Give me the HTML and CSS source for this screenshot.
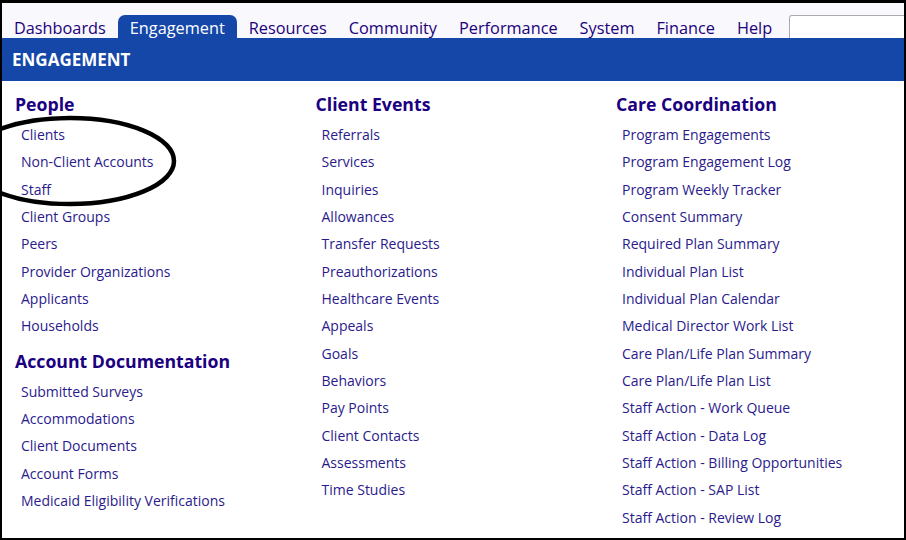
FILE: index.html
```html
<!DOCTYPE html>
<html lang="en">
<head>
    <meta charset="UTF-8">
    <link rel="stylesheet" href="styles.css">
    <title>Engagement</title>
</head>

<body>
    <div class="frame">
        <div class="topnav">
            <a class="tab">Dashboards</a>
            <a class="tab active">Engagement</a>
            <a class="tab">Resources</a>
            <a class="tab">Community</a>
            <a class="tab">Performance</a>
            <a class="tab">System</a>
            <a class="tab">Finance</a>
            <a class="tab">Help</a>
            <input type="text" class="search">
        </div>

        <div class="section-title">ENGAGEMENT</div>

        <div class="menu">
            <div class="col">
                <h2>People</h2>
                <ul>
                    <li><a>Clients</a></li>
                    <li><a>Non-Client Accounts</a></li>
                    <li><a>Staff</a></li>
                    <li><a>Client Groups</a></li>
                    <li><a>Peers</a></li>
                    <li><a>Provider Organizations</a></li>
                    <li><a>Applicants</a></li>
                    <li><a>Households</a></li>
                </ul>
                <h2 class="next">Account Documentation</h2>
                <ul>
                    <li><a>Submitted Surveys</a></li>
                    <li><a>Accommodations</a></li>
                    <li><a>Client Documents</a></li>
                    <li><a>Account Forms</a></li>
                    <li><a>Medicaid Eligibility Verifications</a></li>
                </ul>
            </div>
            <div class="col">
                <h2>Client Events</h2>
                <ul>
                    <li><a>Referrals</a></li>
                    <li><a>Services</a></li>
                    <li><a>Inquiries</a></li>
                    <li><a>Allowances</a></li>
                    <li><a>Transfer Requests</a></li>
                    <li><a>Preauthorizations</a></li>
                    <li><a>Healthcare Events</a></li>
                    <li><a>Appeals</a></li>
                    <li><a>Goals</a></li>
                    <li><a>Behaviors</a></li>
                    <li><a>Pay Points</a></li>
                    <li><a>Client Contacts</a></li>
                    <li><a>Assessments</a></li>
                    <li><a>Time Studies</a></li>
                </ul>
            </div>
            <div class="col">
                <h2>Care Coordination</h2>
                <ul>
                    <li><a>Program Engagements</a></li>
                    <li><a>Program Engagement Log</a></li>
                    <li><a>Program Weekly Tracker</a></li>
                    <li><a>Consent Summary</a></li>
                    <li><a>Required Plan Summary</a></li>
                    <li><a>Individual Plan List</a></li>
                    <li><a>Individual Plan Calendar</a></li>
                    <li><a>Medical Director Work List</a></li>
                    <li><a>Care Plan/Life Plan Summary</a></li>
                    <li><a>Care Plan/Life Plan List</a></li>
                    <li><a>Staff Action - Work Queue</a></li>
                    <li><a>Staff Action - Data Log</a></li>
                    <li><a>Staff Action - Billing Opportunities</a></li>
                    <li><a>Staff Action - SAP List</a></li>
                    <li><a>Staff Action - Review Log</a></li>
                </ul>
            </div>
        </div>

        <!-- pen circle around the first three people links -->
        <svg class="mark" width="200" height="100" viewBox="0 0 200 100">
            <ellipse cx="68" cy="48" rx="104" ry="43" fill="none" stroke="#000" stroke-width="4.5"/>
        </svg>
    </div>
</body>
</html>
```

FILE: styles.css
```css
body {
    margin: 0;
    font-family: 'Open Sans', sans-serif;
    background-color: #fff;
}

.frame {
    position: relative;
    width: 906px;
    height: 540px;
    box-sizing: border-box;
    border-top: 3px solid #000;
    border-left: 2px solid #000;
    border-right: 2px solid #000;
    border-bottom: 2px solid #000;
    overflow: hidden;
}

.topnav {
    display: flex;
    align-items: flex-end;
    height: 35px;
    padding-left: 1px;
    background-color: #f8f8fd;
}

.tab {
    flex-shrink: 0;
    height: 23px;
    padding: 0 11px;
    font-size: 16.3px;
    color: #22007a;
    line-height: 26px;
    overflow: hidden;
}

.tab.active {
    margin: 0 1px;
    padding: 0 12px;
    background-color: #1447a8;
    color: #fff;
    border-radius: 7px 7px 0 0;
}

.search {
    flex: 1 1 auto;
    min-width: 0;
    width: auto;
    margin-left: 6px;
    margin-right: -4px;
    height: 23px;
    box-sizing: border-box;
    border: 1px solid #aaa;
    border-bottom: none;
    border-radius: 3px 0 0 0;
    background-color: #fff;
}

.section-title {
    height: 43px;
    padding-left: 10px;
    background-color: #1447a8;
    color: #fff;
    font-weight: bold;
    font-size: 17px;
    line-height: 44px;
}

.menu {
    display: flex;
    padding: 7px 0 0 13px;
}

.col {
    flex: 0 0 300.5px;
}

h2 {
    margin: 0;
    font-size: 17.7px;
    font-weight: bold;
    color: #1b0080;
    line-height: 32px;
}

h2.next {
    margin-top: 5px;
}

ul {
    list-style: none;
    margin: 0;
    padding: 1px 0 0 6px;
}

li {
    line-height: 27.35px;
    font-size: 14px;
}

li a {
    color: #2a1a8c;
}

.mark {
    position: absolute;
    left: 0;
    top: 110px;
}
```
